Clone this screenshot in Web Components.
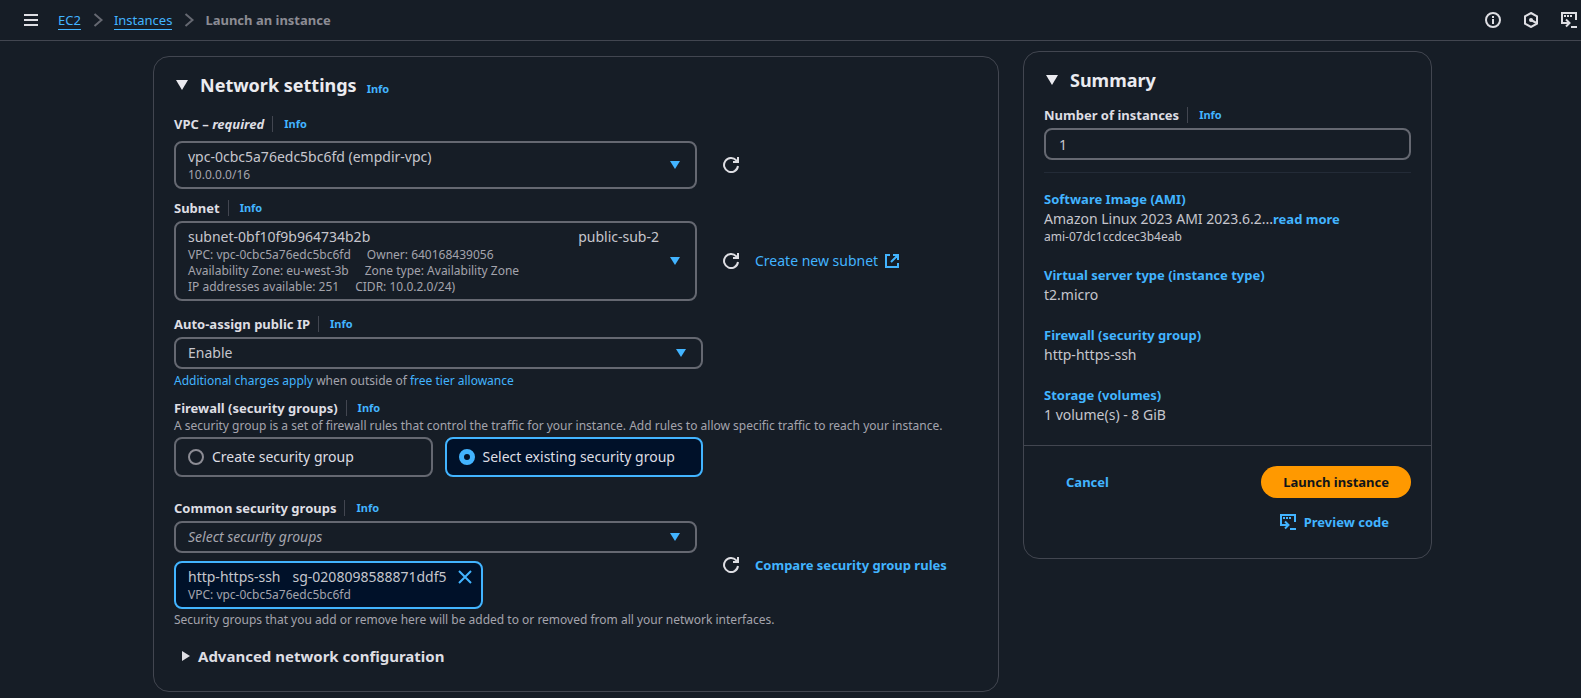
<!DOCTYPE html>
<html lang="en">
<head>
<meta charset="utf-8">
<meta name="viewport" content="width=device-width, initial-scale=1">
<title>Launch an instance | EC2</title>
<style>
:root {
  --bg: #161d26; --line: #424650; --control: #656871; --accent: #42b4ff;
  --selected: #001129; --heading: #ebebf0; --label: #dedee3; --text: #c6c6cd; --muted: #a4a4ad;
}
body { margin: 0; background: var(--bg); color: var(--text); font: 14px/20px "Noto Sans", "Open Sans", sans-serif; }
main { display: grid; grid-template-columns: minmax(0, 1fr) 409px; gap: 24px; align-items: start; padding: 10px 149px 6px 153px; }
.network { margin-top: 5px; }
a { color: var(--accent); text-decoration: none; }
.info { font-size: 11px; font-weight: 700; }
@media (max-width: 1300px) { main { padding-inline: 24px; } }
@media (max-width: 1000px) { main { grid-template-columns: minmax(0, 1fr); } }
</style>
</head>
<body>
<ec2-topbar></ec2-topbar>
<main>
  <ui-panel class="network" heading="Network settings">
    <a class="info" slot="info" href="#info">Info</a>
    <network-form></network-form>
  </ui-panel>
  <ui-panel heading="Summary">
    <launch-summary></launch-summary>
    <launch-actions slot="footer"></launch-actions>
  </ui-panel>
</main>
<script>
const BASE = `
  :host, *, *::before { box-sizing: border-box; }
  :host { display: block; }
  a { color: var(--accent); text-decoration: none; }
  button, input, select { font: inherit; color: inherit; margin: 0; }
  button { background: none; border: 0; padding: 0; cursor: pointer; }
  svg { display: block; }
`;

const ICONS = {
  menu: '<path d="M1 3h14M1 8h14M1 13h14"/>',
  chevron: '<path d="m4.5 2 7 6-7 6"/>',
  info: '<circle cx="8" cy="8" r="7"/><path d="M8 7v5M8 4v2"/>',
  hexagon: '<path d="M8 1 14 4.3v7.4L8 15 2 11.7V4.3Z"/><circle cx="8" cy="8" r="2" fill="currentColor" stroke="none"/><path d="m8 8 5.500 3"/>',
  code: '<path d="M6 11H1V1h14v7M10 15h6M5 7.500 8.500 11 5 14.500M3 11h5"/><path d="M3 4h2M6 4h2M9 4h2"/>',
  refresh: '<path d="M15 9a7 7 0 1 1-1.700-5.600L15 5M15 0v5h-5"/>',
  external: '<path d="M6 2H2v12h12v-4M9 2h5v5M14 2 7 9"/>',
  close: '<path d="m2 2 12 12M14 2 2 14"/>',
  down: '<path d="M3 4h10l-5 8Z" fill="currentColor" stroke="none"/>',
  downLarge: '<path d="M2 3h12L8 13Z" fill="currentColor" stroke="none"/>',
  right: '<path d="M4 3v10l8-5Z" fill="currentColor" stroke="none"/>'
};

class UiElement extends HTMLElement {
  render(css, html) {
    if (!this.shadowRoot) this.attachShadow({ mode: "open" });
    this.shadowRoot.innerHTML = `<style>${BASE}${css}</style>${html}`;
  }
}

customElements.define("ui-icon", class extends UiElement {
  connectedCallback() {
    this.render(`:host { flex: none; width: 16px; height: 16px; }
      svg { width: 100%; height: 100%; fill: none; stroke: currentColor; stroke-width: 2; }`,
      `<svg viewBox="0 0 16 16" aria-hidden="true">${ICONS[this.getAttribute("name")]}</svg>`);
  }
});

customElements.define("ec2-topbar", class extends UiElement {
  connectedCallback() {
    this.render(`
      :host { display: flex; align-items: center; height: 41px; padding: 0 4px 0 23px; border-bottom: 1px solid var(--line); font-size: 13px; }
      button { color: var(--label); }
      nav { flex: 1; margin-left: 19px; }
      ol { display: flex; align-items: center; gap: 8px; margin: 0; padding: 0; list-style: none; }
      li { display: flex; align-items: center; gap: 9px; color: #8c8c94; font-weight: 700; }
      li a { font-weight: 400; line-height: 18px; border-bottom: 1px solid var(--accent); }
      li ui-icon { color: var(--control); }
      .tools { display: flex; gap: 22px; }
    `, `
      <button aria-label="Open navigation"><ui-icon name="menu"></ui-icon></button>
      <nav aria-label="Breadcrumbs"><ol>
        <li><a href="#ec2">EC2</a><ui-icon name="chevron"></ui-icon></li>
        <li><a href="#instances">Instances</a><ui-icon name="chevron"></ui-icon></li>
        <li aria-current="page">Launch an instance</li>
      </ol></nav>
      <div class="tools">
        <button aria-label="Info"><ui-icon name="info"></ui-icon></button>
        <button aria-label="Tutorials"><ui-icon name="hexagon"></ui-icon></button>
        <button aria-label="Preview code"><ui-icon name="code"></ui-icon></button>
      </div>`);
  }
});

customElements.define("ui-panel", class extends UiElement {
  connectedCallback() {
    this.render(`
      :host { border: 1px solid var(--line); border-radius: 16px; }
      header { display: flex; align-items: baseline; gap: 10px; padding: 16px 20px 0; }
      h2 { margin: 0; font-size: 18px; font-weight: 700; line-height: 24px; color: var(--heading); }
      button { display: flex; align-items: center; gap: 10px; }
      .body { padding: 0 20px 20px; }
      slot[name=footer] { display: block; }
    `, `
      <header><h2><button aria-expanded="true"><ui-icon name="downLarge"></ui-icon>${this.getAttribute("heading")}</button></h2><slot name="info"></slot></header>
      <div class="body"><slot></slot></div>
      <slot name="footer"></slot>`);
  }
});

/* Label row, control and side actions. The control is a select, a text input, or a group that is slotted in. */
customElements.define("ui-field", class extends UiElement {
  connectedCallback() {
    const kind = this.getAttribute("kind");
    const label = this.getAttribute("label");
    const required = this.hasAttribute("required") ? " – <i>required</i>" : "";
    const value = this.getAttribute("value") || "";
    const arrow = '<ui-icon name="down"></ui-icon>';
    const control = {
      select: `<div class="box"><select id="control"><option>${value}</option></select>${arrow}</div>`,
      rich: `<div class="box rich"><div class="detail"><slot></slot></div>${arrow}<select id="control"></select></div>`,
      input: `<input id="control" type="text" inputmode="numeric" value="${value}">`,
      group: `<div role="group" aria-labelledby="name"><slot></slot></div>`
    }[kind];
    const name = kind === "group" ? `<span id="name" class="name">${label}</span>` : `<label class="name" for="control">${label}${required}</label>`;
    this.render(`
      .head { display: flex; align-items: center; margin-bottom: 3px; }
      :host([required]) .head { margin-bottom: 7px; }
      :host([kind=group]) .head { margin-bottom: 0; }
      .name { font-size: 13px; font-weight: 700; color: var(--label); padding-right: 8px; }
      .head a { height: 16px; line-height: 16px; padding-left: 11px; border-left: 1px solid var(--line); font-size: 11px; font-weight: 700; }
      .row { display: flex; align-items: center; gap: 26px; }
      .main { flex: 1; min-width: 0; max-width: 529px; }
      :host([narrow]) .main { max-width: 523px; }
      :host([kind=input]) .main, :host([kind=group]) .main { max-width: none; }
      .box { position: relative; display: flex; align-items: center; border: 2px solid var(--control); border-radius: 8px; }
      .box ui-icon { color: var(--accent); position: absolute; right: 12px; pointer-events: none; }
      select { appearance: none; width: 100%; height: 28px; padding: 0 40px 0 12px; border: 0; border-radius: 6px; background: none; }
      :host([placeholder]) select { font-style: italic; color: var(--muted); }
      .rich select { position: absolute; inset: 0; height: 100%; opacity: 0; }
      .detail { flex: 1; padding: 4px 36px 4px 12px; }
      input { display: block; width: 100%; height: 32px; padding: 0 13px; border: 2px solid var(--control); border-radius: 8px; background: none; }
      .help { font-size: 12px; line-height: 16px; color: var(--muted); }
    `, `
      <div class="head">${name}<a href="#info">Info</a></div>
      <div class="row"><div class="main">${control}<slot name="below"></slot></div><slot name="actions"></slot></div>
      <div class="help"><slot name="help"></slot></div>`);
    const select = this.shadowRoot.querySelector(".rich select");
    if (select) select.add(new Option("", value, true, true));
  }
});

customElements.define("ui-tile", class extends UiElement {
  connectedCallback() {
    this.render(`
      :host { flex: 1; }
      label { display: flex; align-items: center; gap: 8px; height: 40px; padding: 0 12px; border: 2px solid var(--control); border-radius: 8px; color: var(--label); }
      label:has(:checked) { border-color: var(--accent); background: var(--selected); }
      input { appearance: none; width: 16px; height: 16px; border: 2px solid #8c8c94; border-radius: 50%; }
      input:checked { border: 5px solid var(--accent); }
    `, `<label><input type="radio" name="firewall" ${this.hasAttribute("checked") ? "checked" : ""}><slot></slot></label>`);
  }
});

customElements.define("network-form", class extends UiElement {
  connectedCallback() {
    this.render(`
      :host { padding-top: 15px; }
      ui-field { margin-bottom: 9px; }
      .subnet { margin-bottom: 13px; }
      .tiles { display: flex; gap: 12px; max-width: 529px; margin: 3px 0 21px; }
      .firewall, .groups { margin-bottom: 0; }
      p { margin: 0; }
      .first { display: flex; justify-content: space-between; }
      .small { font-size: 12px; line-height: 16px; color: var(--muted); }
      .small span + span { margin-left: 16px; }
      .actions { display: flex; align-items: center; gap: 16px; }
      .actions button, .actions a { display: flex; align-items: center; gap: 6px; }
      .actions button { color: var(--label); }
      .strong { font-size: 13px; font-weight: 700; }
      .ip-help { padding-top: 4px; }
      .token { display: flex; gap: 10px; width: fit-content; margin-top: 8px; padding: 4px 8px 4px 12px; border: 2px solid var(--accent); border-radius: 8px; background: var(--selected); }
      .token button { align-self: start; padding: 2px 0; color: var(--accent); }
      .token .first { justify-content: start; gap: 12px; }
      .sg-help { padding-top: 3px; }
      h3 { margin: 16px 0 3px; font-size: 15px; line-height: 24px; color: var(--label); }
      h3 button { display: flex; align-items: center; gap: 4px; padding-left: 4px; }
    `, `
      <ui-field kind="rich" label="VPC" required narrow value="vpc-0cbc5a76edc5bc6fd">
        <p>vpc-0cbc5a76edc5bc6fd (empdir-vpc)</p>
        <p class="small">10.0.0.0/16</p>
        <div class="actions" slot="actions"><button aria-label="Refresh VPCs"><ui-icon name="refresh"></ui-icon></button></div>
      </ui-field>
      <ui-field class="subnet" kind="rich" label="Subnet" narrow value="subnet-0bf10f9b964734b2b">
        <p class="first"><span>subnet-0bf10f9b964734b2b</span><span>public-sub-2</span></p>
        <p class="small"><span>VPC: vpc-0cbc5a76edc5bc6fd</span><span>Owner: 640168439056</span></p>
        <p class="small"><span>Availability Zone: eu-west-3b</span><span>Zone type: Availability Zone</span></p>
        <p class="small"><span>IP addresses available: 251</span><span>CIDR: 10.0.2.0/24)</span></p>
        <div class="actions" slot="actions"><button aria-label="Refresh subnets"><ui-icon name="refresh"></ui-icon></button>
          <a href="#subnet">Create new subnet<ui-icon name="external"></ui-icon></a></div>
      </ui-field>
      <ui-field kind="select" label="Auto-assign public IP" value="Enable">
        <p class="ip-help" slot="help"><a href="#charges">Additional charges apply</a> when outside of <a href="#free">free tier allowance</a></p>
      </ui-field>
      <ui-field class="firewall" kind="group" label="Firewall (security groups)">
        <p class="small">A security group is a set of firewall rules that control the traffic for your instance. Add rules to allow specific traffic to reach your instance.</p>
        <div class="tiles" role="radiogroup"><ui-tile>Create security group</ui-tile><ui-tile checked>Select existing security group</ui-tile></div>
      </ui-field>
      <ui-field class="groups" kind="select" label="Common security groups" narrow placeholder value="Select security groups">
        <div class="token" slot="below">
          <div><p class="first"><span>http-https-ssh</span><span>sg-0208098588871ddf5</span></p><p class="small">VPC: vpc-0cbc5a76edc5bc6fd</p></div>
          <button aria-label="Remove http-https-ssh"><ui-icon name="close"></ui-icon></button>
        </div>
        <div class="actions" slot="actions"><button aria-label="Refresh security groups"><ui-icon name="refresh"></ui-icon></button>
          <a class="strong" href="#compare">Compare security group rules</a></div>
        <p class="sg-help" slot="help">Security groups that you add or remove here will be added to or removed from all your network interfaces.</p>
      </ui-field>
      <h3><button aria-expanded="false"><ui-icon name="right"></ui-icon>Advanced network configuration</button></h3>`);
  }
});

customElements.define("launch-summary", class extends UiElement {
  connectedCallback() {
    this.render(`
      :host { padding-top: 13px; }
      dl { margin: 12px 0 0; padding-top: 16px; border-top: 1px solid #232b37; display: grid; gap: 20px; }
      dt { font-size: 13px; font-weight: 700; }
      dd { margin: 0; }
      dd a { font-size: 13px; font-weight: 700; }
      small { display: block; font-size: 12px; line-height: 16px; }
    `, `
      <ui-field kind="input" label="Number of instances" value="1"></ui-field>
      <dl>
        <div><dt><a href="#ami">Software Image (AMI)</a></dt><dd>Amazon Linux 2023 AMI 2023.6.2...<a href="#more">read more</a><small>ami-07dc1ccdcec3b4eab</small></dd></div>
        <div><dt><a href="#type">Virtual server type (instance type)</a></dt><dd>t2.micro</dd></div>
        <div><dt><a href="#firewall">Firewall (security group)</a></dt><dd>http-https-ssh</dd></div>
        <div><dt><a href="#storage">Storage (volumes)</a></dt><dd>1 volume(s) - 8 GiB</dd></div>
      </dl>`);
  }
});

customElements.define("launch-actions", class extends UiElement {
  connectedCallback() {
    this.render(`
      :host { display: flex; justify-content: space-between; align-items: start; padding: 20px; border-top: 1px solid var(--line); }
      button { display: flex; align-items: center; gap: 8px; height: 32px; padding: 0 22px; border-radius: 16px; font-size: 13px; font-weight: 700; color: var(--accent); }
      .stack { display: grid; gap: 8px; justify-items: end; }
      .primary { background: #ff9900; color: #0f141a; }
    `, `
      <button>Cancel</button>
      <div class="stack"><button class="primary">Launch instance</button><button><ui-icon name="code"></ui-icon>Preview code</button></div>`);
  }
});
</script>
</body>
</html>
